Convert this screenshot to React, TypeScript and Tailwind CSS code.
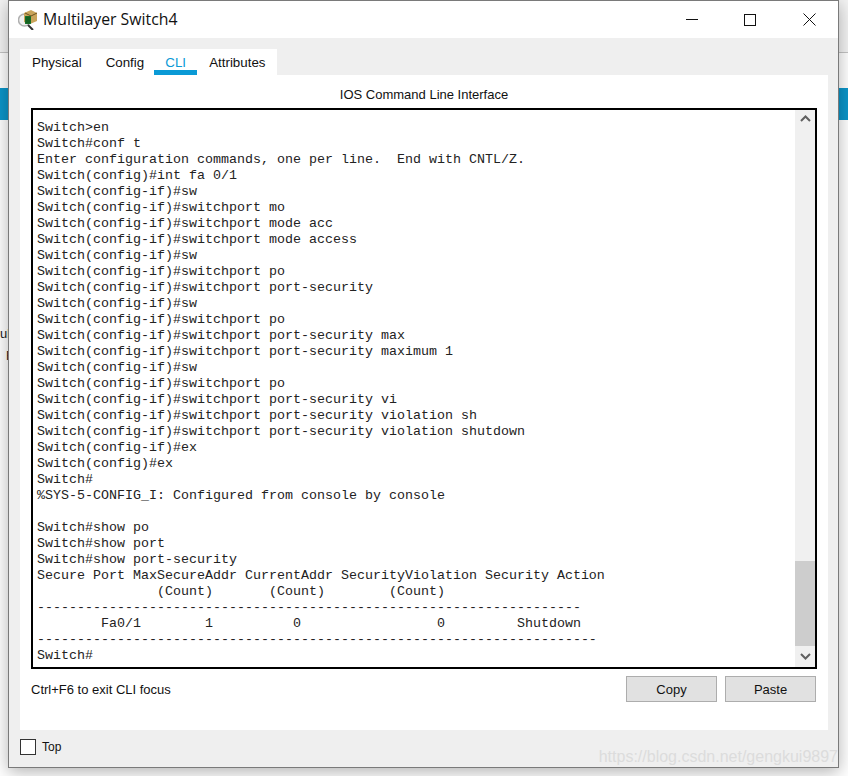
const cliLines = [
  "Switch>en",
  "Switch#conf t",
  "Enter configuration commands, one per line.  End with CNTL/Z.",
  "Switch(config)#int fa 0/1",
  "Switch(config-if)#sw",
  "Switch(config-if)#switchport mo",
  "Switch(config-if)#switchport mode acc",
  "Switch(config-if)#switchport mode access",
  "Switch(config-if)#sw",
  "Switch(config-if)#switchport po",
  "Switch(config-if)#switchport port-security",
  "Switch(config-if)#sw",
  "Switch(config-if)#switchport po",
  "Switch(config-if)#switchport port-security max",
  "Switch(config-if)#switchport port-security maximum 1",
  "Switch(config-if)#sw",
  "Switch(config-if)#switchport po",
  "Switch(config-if)#switchport port-security vi",
  "Switch(config-if)#switchport port-security violation sh",
  "Switch(config-if)#switchport port-security violation shutdown",
  "Switch(config-if)#ex",
  "Switch(config)#ex",
  "Switch#",
  "%SYS-5-CONFIG_I: Configured from console by console",
  "",
  "Switch#show po",
  "Switch#show port",
  "Switch#show port-security",
  "Secure Port MaxSecureAddr CurrentAddr SecurityViolation Security Action",
  "               (Count)       (Count)        (Count)",
  "-".repeat(68),
  "        Fa0/1        1          0                 0         Shutdown",
  "-".repeat(70),
  "Switch#",
];

const tabs = ["Physical", "Config", "CLI", "Attributes"];

function DeviceIcon() {
  return (
    <svg width="20" height="20" viewBox="0 0 20 20" className="shrink-0">
      <circle cx="6.5" cy="10" r="6" fill="#f0f0f0" stroke="#b0b0b0" strokeWidth="1.5" />
      <path d="M10 15l5 5" stroke="#333" strokeWidth="2" />
      <path d="M6 3l7-3 6 3v8l-7 3-6-2z" fill="#c9a45a" />
      <path d="M7 3l6 3 6-3" fill="none" stroke="#6b5120" strokeWidth="1" />
      <rect x="7" y="6" width="6" height="8" fill="#1f7a2e" />
      <path d="M9 6v8M11 6v8M7 8h6M7 10h6M7 12h6" stroke="#0c4a16" strokeWidth="0.6" />
    </svg>
  );
}

export default function App() {
  return (
    <div className="relative w-[848px] h-[776px] overflow-hidden bg-[#f3f3f3] font-['Liberation_Sans',Arial,sans-serif]">
      {/* desktop behind the dialog */}
      <div className="flex flex-col h-full">
        <div className="h-[53px] border-b border-[#c4c4c4]" />
        <div className="h-[35px] bg-white" />
        <div className="h-[32px] bg-[#0b95c9]" />
        <div className="h-[203px] bg-white" />
        <div className="h-[22px] bg-white flex text-[13px] leading-[22px] text-[#222]">
          <span className="whitespace-nowrap">ul</span>
        </div>
        <div className="h-[22px] bg-white flex text-[13px] leading-[22px] text-[#222]">
          <span className="pl-[6px]">F</span>
        </div>
        <div className="flex-1 bg-white" />
      </div>

      {/* dialog window */}
      <div className="absolute left-[8px] top-0 w-[831px] h-[768px] flex flex-col bg-[#efefef] border border-[#7a7a7a] shadow-[0_4px_16px_rgba(0,0,0,0.3)]">
        <div className="h-[37px] shrink-0 bg-white flex items-center pl-[9px]">
          <DeviceIcon />
          <span className="ml-[5px] text-[15.8px] text-[#111] font-['Open_Sans',sans-serif]">Multilayer Switch4</span>
          <div className="ml-auto flex items-center pr-[22px]">
            <svg width="12" height="12" viewBox="0 0 12 12" className="mr-[46px]"><path d="M0 5.5h12" stroke="#111" strokeWidth="1" /></svg>
            <svg width="12" height="12" viewBox="0 0 12 12" className="mr-[47px]"><rect x="0.5" y="0.5" width="11" height="11" fill="none" stroke="#111" strokeWidth="1" /></svg>
            <svg width="13" height="13" viewBox="0 0 13 13"><path d="M0.5 0.5l12 12M12.5 0.5l-12 12" stroke="#111" strokeWidth="1" /></svg>
          </div>
        </div>

        <div className="flex-1 flex flex-col px-[11px] pt-[11px]">
          <div className="flex self-start h-[26px] w-[257px] bg-white pl-[3px] text-[13.33px] text-[#111]">
            {tabs.map((t) => (
              <div
                key={t}
                className={
                  t === "CLI"
                    ? "h-[26px] w-[43px] ml-[10px] mr-[3px] flex justify-center pt-[5px] leading-[18px] text-[#0a9ad6] border-b-[5px] border-[#0a9ad6]"
                    : t === "Config"
                      ? "h-[26px] ml-[24px] pt-[5px] leading-[18px]"
                      : "h-[26px] ml-[9px] pt-[5px] leading-[18px]"
                }
              >
                {t}
              </div>
            ))}
          </div>

          <div className="h-[655px] w-[808px] bg-white flex flex-col px-[11px]">
            <div className="h-[33px] pt-[11px] text-center text-[13px] leading-[17px] text-[#111]">IOS Command Line Interface</div>
            <div className="h-[561px] flex border-2 border-black bg-white">
              <pre className="flex-1 pt-[10px] pl-[4px] text-[13.33px] leading-[16px] text-[#222] font-['Liberation_Mono','Courier_New',monospace]">
                {cliLines.join("\n")}
              </pre>
              <div className="w-[20px] flex flex-col bg-[#f0f0f0]">
                <div className="h-[17px] flex items-center justify-center">
                  <svg width="11" height="7" viewBox="0 0 11 7"><path d="M1 6l4.5-4.5L10 6" fill="none" stroke="#606060" strokeWidth="2" /></svg>
                </div>
                <div className="flex-1" />
                <div className="h-[85px] bg-[#cdcdcd]" />
                <div className="h-[21px] flex items-center justify-center">
                  <svg width="11" height="7" viewBox="0 0 11 7"><path d="M1 1l4.5 4.5L10 1" fill="none" stroke="#606060" strokeWidth="2" /></svg>
                </div>
              </div>
            </div>
            <div className="flex items-start pt-[7px]">
              <span className="pt-[7px] text-[13px] leading-[14px] text-[#111]">Ctrl+F6 to exit CLI focus</span>
              <div className="ml-auto mr-[1px] flex gap-[8px]">
                <button className="w-[91px] h-[26px] pt-[1px] bg-[#e1e1e1] border border-[#adadad] text-[13px] text-[#111]">Copy</button>
                <button className="w-[91px] h-[26px] pt-[1px] bg-[#e1e1e1] border border-[#adadad] text-[13px] text-[#111]">Paste</button>
              </div>
            </div>
          </div>

          <div className="flex-1 flex items-center pb-[4px]">
            <div className="flex items-center gap-[6px]">
              <div className="w-[16px] h-[16px] bg-white border border-[#333]" />
              <span className="text-[12px] text-[#111]">Top</span>
            </div>
          </div>
        </div>
      </div>

      {/* image watermark over the screenshot */}
      <span className="absolute right-[10px] bottom-[10px] text-[16px] leading-[18px] text-[#dcdcdc]">https://blog.csdn.net/gengkui9897</span>
    </div>
  );
}
